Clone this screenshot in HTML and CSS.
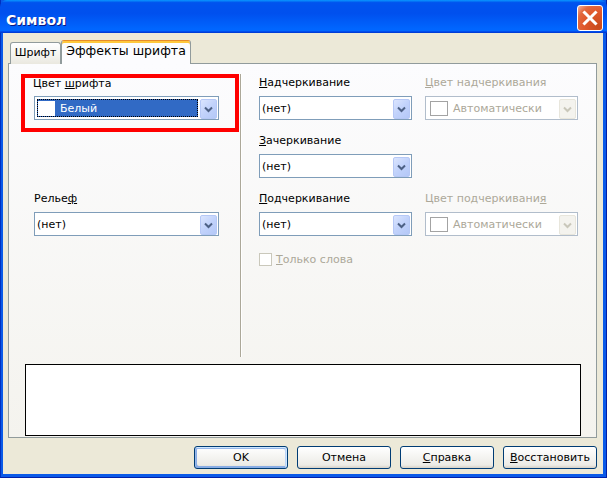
FILE: index.html
```html
<!DOCTYPE html>
<html lang="ru">

<head>
    <meta charset="UTF-8" />
    <meta name="viewport" content="width=device-width, initial-scale=1.0" />
    <title>Символ</title>
    <link rel="stylesheet" href="styles.css">
</head>

<body>
    <div class="window">
        <div class="title-bar">
            <span class="title">Символ</span>
            <button class="close-btn" aria-label="Закрыть">
                <svg viewBox="0 0 24 24" width="24" height="24">
                    <path d="M6.5 6.5 L17.5 17.5 M17.5 6.5 L6.5 17.5" stroke="#fff" stroke-width="3" stroke-linecap="square" fill="none" />
                </svg>
            </button>
        </div>

        <div class="client">
            <div class="tabs">
                <div class="tab">Шрифт</div>
                <div class="tab active">Эффекты шрифта</div>
            </div>

            <div class="panel">
                <div class="panel-main">
                    <div class="col-left">
                        <!-- red marker around the font colour box -->
                        <div class="highlight">
                            <div class="label tight">Цвет <u>ш</u>рифта</div>
                            <div class="combo wide">
                                <div class="value selected"><span class="swatch"></span>Белый</div>
                                <span class="arrow">
                                    <svg viewBox="0 0 17 20" width="17" height="20"><path d="M5 8.5 L8.5 12 L12 8.5" stroke="#4d6185" stroke-width="2" fill="none" /></svg>
                                </span>
                            </div>
                        </div>

                        <div class="field relief">
                            <div class="label">Релье<u>ф</u></div>
                            <div class="combo wide">
                                <div class="value">(нет)</div>
                                <span class="arrow">
                                    <svg viewBox="0 0 17 20" width="17" height="20"><path d="M5 8.5 L8.5 12 L12 8.5" stroke="#4d6185" stroke-width="2" fill="none" /></svg>
                                </span>
                            </div>
                        </div>
                    </div>

                    <div class="separator"></div>

                    <div class="col-right">
                        <div class="field">
                            <div class="label"><u>Н</u>адчеркивание</div>
                            <div class="combo">
                                <div class="value">(нет)</div>
                                <span class="arrow">
                                    <svg viewBox="0 0 17 20" width="17" height="20"><path d="M5 8.5 L8.5 12 L12 8.5" stroke="#4d6185" stroke-width="2" fill="none" /></svg>
                                </span>
                            </div>
                        </div>
                        <div class="field disabled">
                            <div class="label"><u>Ц</u>вет надчеркивания</div>
                            <div class="combo">
                                <div class="value"><span class="swatch"></span>Автоматически</div>
                                <span class="arrow">
                                    <svg viewBox="0 0 17 20" width="17" height="20"><path d="M5 8.5 L8.5 12 L12 8.5" stroke="#c9c7ba" stroke-width="2" fill="none" /></svg>
                                </span>
                            </div>
                        </div>

                        <div class="field">
                            <div class="label"><u>З</u>ачеркивание</div>
                            <div class="combo">
                                <div class="value">(нет)</div>
                                <span class="arrow">
                                    <svg viewBox="0 0 17 20" width="17" height="20"><path d="M5 8.5 L8.5 12 L12 8.5" stroke="#4d6185" stroke-width="2" fill="none" /></svg>
                                </span>
                            </div>
                        </div>
                        <div></div>

                        <div class="field">
                            <div class="label"><u>П</u>одчеркивание</div>
                            <div class="combo">
                                <div class="value">(нет)</div>
                                <span class="arrow">
                                    <svg viewBox="0 0 17 20" width="17" height="20"><path d="M5 8.5 L8.5 12 L12 8.5" stroke="#4d6185" stroke-width="2" fill="none" /></svg>
                                </span>
                            </div>
                        </div>
                        <div class="field disabled">
                            <div class="label">Цвет подчеркивани<u>я</u></div>
                            <div class="combo">
                                <div class="value"><span class="swatch"></span>Автоматически</div>
                                <span class="arrow">
                                    <svg viewBox="0 0 17 20" width="17" height="20"><path d="M5 8.5 L8.5 12 L12 8.5" stroke="#c9c7ba" stroke-width="2" fill="none" /></svg>
                                </span>
                            </div>
                        </div>

                        <label class="check disabled">
                            <span class="box"></span>
                            <span><u>Т</u>олько слова</span>
                        </label>
                    </div>
                </div>

                <div class="preview"></div>
            </div>

            <div class="buttons">
                <button class="btn default">OK</button>
                <button class="btn">Отмена</button>
                <button class="btn"><u>С</u>правка</button>
                <button class="btn"><u>В</u>осстановить</button>
            </div>
        </div>
    </div>
</body>

</html>
```

FILE: styles.css
```css
/* Reset */
* {
    margin: 0;
    padding: 0;
    box-sizing: border-box;
}

body {
    font-family: "DejaVu Sans", sans-serif;
    font-size: 11px;
    color: #000;
    width: 607px;
    height: 478px;
    overflow: hidden;
}

u {
    text-decoration: underline;
    text-underline-offset: 1px;
}

/* Window frame */
.window {
    width: 607px;
    height: 478px;
    background: #0a5ae8;
    border-left: 1px solid #0030c0;
    border-right: 1px solid #0020a8;
    border-bottom: 1px solid #0020a8;
    display: flex;
    flex-direction: column;
}

.title-bar {
    height: 33px;
    display: flex;
    justify-content: space-between;
    align-items: flex-start;
    padding: 0 4px 0 6px;
    background: linear-gradient(180deg, #0997ff, #0053ee 8%, #0050ee 40%, #06f 88%, #06f 93%, #005bff 95%, #003dd7 96%, #003dd7);
    margin: 0 -1px;
    border-radius: 7px 7px 0 0;
}

.title {
    margin-top: 12px;
    color: #fff;
    font-weight: bold;
    font-size: 14px;
    line-height: 17px;
    text-shadow: 1px 1px 0 #0a1883;
}

.close-btn {
    margin-top: 5px;
    width: 26px;
    height: 26px;
    border: 1px solid #fff;
    border-radius: 3px;
    background: radial-gradient(circle at 85% 85%, #c84a1c 0, #e0582c 50%, #e2693f 75%, #f2a58a 95%, #fbd6c8 100%);
    display: flex;
    align-items: center;
    justify-content: center;
}

.client {
    flex: 1;
    margin: 0 3px 3px 2px;
    background: #ece9d8;
}

/* Tabs */
.tabs {
    display: flex;
    align-items: flex-end;
    height: 24px;
    margin: 7px 0 -1px 0;
    padding-left: 7px;
}

.tab {
    height: 22px;
    width: 51px;
    padding-top: 3px;
    text-align: center;
    line-height: 14px;
    border: 1px solid #919b9c;
    border-bottom: none;
    border-radius: 3px 3px 0 0;
    background: linear-gradient(180deg, #fff, #f3f3ef 60%, #eae8df);
}

.tab.active {
    position: relative;
    z-index: 1;
    width: 130px;
    height: 24px;
    font-size: 12.5px;
    border-top: 1px solid #e68b2c;
    box-shadow: inset 0 2px #ffc83c;
    background: #fcfcfe;
}

/* Tab page */
.panel {
    height: 375px;
    margin: 0 6px 0 5px;
    border: 1px solid #919b9c;
    background: linear-gradient(180deg, #fcfcfe, #f4f3ee);
}

.panel-main {
    display: flex;
    padding: 10px 0 0 12px;
}

.col-left {
    width: 219px;
}

.highlight {
    width: 218px;
    height: 58px;
    border: 4px solid #f00;
    padding-left: 8px;
}

.label {
    line-height: 14px;
    margin-bottom: 6px;
    white-space: nowrap;
}

.label.tight {
    line-height: 12px;
    margin-bottom: 6px;
}

.highlight .combo {
    margin-left: 1px;
}

.relief {
    margin-top: 60px;
    padding-left: 13px;
}

.separator {
    width: 2px;
    height: 283px;
    border-left: 1px solid #aca899;
    border-right: 1px solid #fff;
}

.col-right {
    margin-left: 17px;
    padding-top: 2px;
    display: grid;
    grid-template-columns: 153px 153px;
    column-gap: 13px;
    row-gap: 14px;
    align-content: start;
}

/* Combo boxes */
.combo {
    width: 153px;
    height: 24px;
    border: 1px solid #7f9db9;
    background: #fff;
    padding: 1px;
    display: flex;
}

.combo.wide {
    width: 185px;
}

.value {
    flex: 1;
    display: flex;
    align-items: center;
    padding-left: 1px;
    margin-right: 2px;
    white-space: nowrap;
}

.value.selected {
    margin: 1px 2px 1px 1px;
    padding-left: 1px;
    background: #316ac5;
    color: #fff;
    outline: 1px dotted #000;
    outline-offset: -1px;
}

.swatch {
    width: 18px;
    height: 15px;
    margin-right: 5px;
    border: 1px solid #7f7f7f;
    background: #fff;
}

.selected .swatch {
    width: 17px;
    border-color: #fff;
}

.arrow {
    width: 17px;
    height: 20px;
    margin-top: 1px;
    border: 1px solid #b6c8f6;
    border-radius: 2px;
    background: linear-gradient(135deg, #dbe5fe, #c1d2fb 50%, #b4c8f7);
}

.arrow svg {
    display: block;
    margin: -1px;
}

.disabled .label,
.disabled .value {
    color: #aca899;
}

.disabled .combo {
    border-color: #b1bdcb;
}

.disabled .swatch {
    border-color: #a3a3a3;
    margin-left: 2px;
}

.disabled .arrow {
    border-color: #e8e6dc;
    background: #f4f3ee;
}

/* Checkbox */
.check {
    margin-top: 3px;
    display: flex;
    align-items: center;
    gap: 4px;
    height: 13px;
    white-space: nowrap;
}

.check .box {
    width: 13px;
    height: 13px;
    border: 1px solid #cac8bb;
    background: #fff;
}

.check.disabled {
    color: #aca899;
}

/* Preview */
.preview {
    height: 72px;
    margin: 7px 15px 0 16px;
    border: 1px solid #000;
    background: #fff;
}

/* Dialog buttons */
.buttons {
    display: flex;
    justify-content: flex-end;
    gap: 9px;
    margin-top: 8px;
    padding-right: 6px;
}

.btn {
    width: 94px;
    height: 23px;
    font-family: "DejaVu Sans", sans-serif;
    font-size: 11px;
    color: #000;
    border: 1px solid #003c74;
    border-radius: 3px;
    background: linear-gradient(180deg, #fff, #ecebe6 86%, #d6d0c5);
}

.btn.default {
    box-shadow: inset -1px 1px #cee7ff, inset 1px 2px #98b8ea, inset -2px 2px #bcd4f6, inset 1px -1px #89ade4, inset 2px -2px #89ade4;
}
```
